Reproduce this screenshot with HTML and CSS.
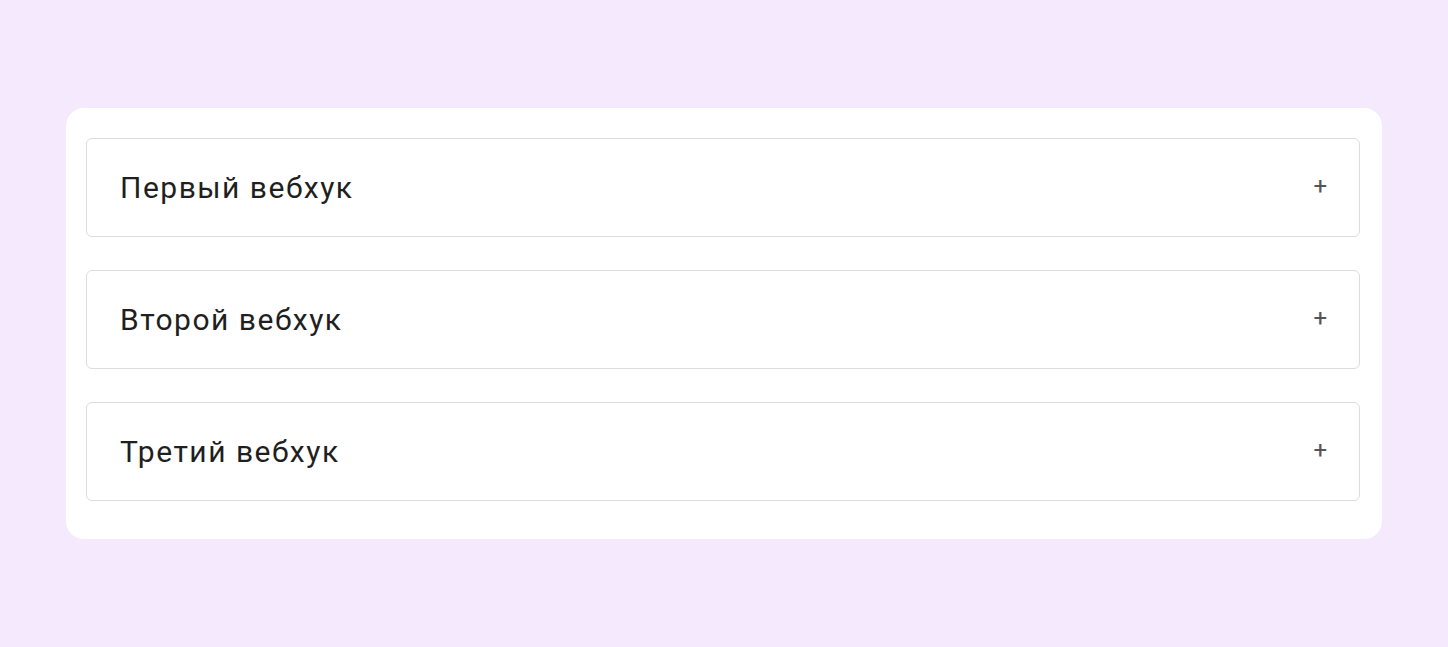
FILE: index.html
```html
<!DOCTYPE html>
<html lang="ru">
<head>
    <meta charset="UTF-8">
    <meta name="viewport" content="width=device-width, initial-scale=1.0">
    <title>Вебхуки</title>
    <link rel="stylesheet" href="styles.css">
</head>
<body>
    <div class="card">
        <!-- Accordion items -->
        <div class="item">
            <span class="item-title">Первый вебхук</span>
            <span class="item-toggle">+</span>
        </div>
        <div class="item">
            <span class="item-title">Второй вебхук</span>
            <span class="item-toggle">+</span>
        </div>
        <div class="item">
            <span class="item-title">Третий вебхук</span>
            <span class="item-toggle">+</span>
        </div>
    </div>
</body>
</html>
```

FILE: styles.css
```css
body {
    margin: 0;
    background-color: #f5eafd;
    font-family: Roboto, "Noto Sans", sans-serif;
    padding: 108px 66px 0 66px;
}
.card {
    background-color: #ffffff;
    border-radius: 18px;
    padding: 30px 22px 38px 20px;
    display: flex;
    flex-direction: column;
    gap: 33px;
}
.item {
    height: 97px;
    border: 1px solid #dcdcdc;
    border-radius: 6px;
    display: flex;
    align-items: center;
    justify-content: space-between;
    padding: 0 32px 0 33px;
}
.item-title {
    font-size: 30px;
    letter-spacing: 1.5px;
    color: #1f1f1f;
}
.item-toggle {
    font-size: 24px;
    color: #555555;
    margin-top: -4px;
}
```
